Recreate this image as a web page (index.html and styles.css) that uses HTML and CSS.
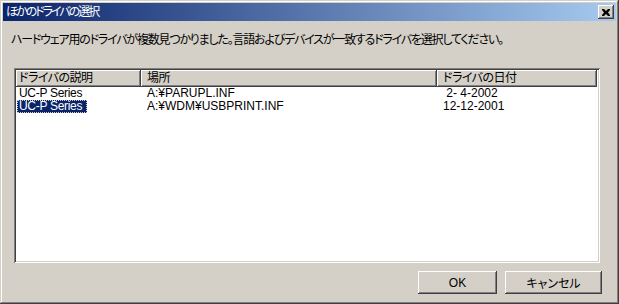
FILE: index.html
```html
<!DOCTYPE html>
<html lang="ja">
<head>
  <meta charset="UTF-8" />
  <title>ほかのドライバの選択</title>
  <link rel="stylesheet" href="styles.css">
</head>
<body>
  <div class="window">
    <div class="titlebar">
      <span class="title">ほかのドライバの選択</span>
      <button class="close" aria-label="閉じる">
        <svg width="8" height="7" viewBox="0 0 8 7">
          <path d="M0 0h2l2 2 2-2h2v1L6 3.5 8 6v1H6L4 5 2 7H0V6l2-2.5L0 1z" fill="#000"/>
        </svg>
      </button>
    </div>

    <div class="content">
      <p class="message">ハードウェア用のドライバが複数見つかりました。言語およびデバイスが一致するドライバを選択してください。</p>

      <div class="listview">
        <div class="header">
          <div class="col col-desc">ドライバの説明</div>
          <div class="col col-path">場所</div>
          <div class="col col-date">ドライバの日付</div>
          <div class="col col-rest"></div>
        </div>
        <div class="row">
          <div class="cell col-desc"><span class="item">UC-P Series</span></div>
          <div class="cell col-path">A:¥PARUPL.INF</div>
          <div class="cell col-date"> 2- 4-2002</div>
        </div>
        <div class="row">
          <div class="cell col-desc"><span class="item selected">UC-P Series</span></div>
          <div class="cell col-path">A:¥WDM¥USBPRINT.INF</div>
          <div class="cell col-date">12-12-2001</div>
        </div>
      </div>

      <div class="actions">
        <button class="btn btn-ok">OK</button>
        <button class="btn btn-cancel">キャンセル</button>
      </div>
    </div>
  </div>
</body>
</html>
```

FILE: styles.css
```css
body {
  margin: 0;
  font-family: "Liberation Sans", "Noto Sans CJK JP", sans-serif;
  font-size: 12px;
  font-feature-settings: "palt";
  color: #000;
  background: #d4d0c8;
}

.window {
  width: 619px;
  height: 304px;
  box-sizing: border-box;
  padding: 3px;
  background: #d4d0c8;
  display: flex;
  flex-direction: column;
  box-shadow: inset -1px -1px #404040, inset 1px 1px #d4d0c8,
              inset -2px -2px #808080, inset 2px 2px #fff;
}

.titlebar {
  height: 18px;
  display: flex;
  align-items: center;
  justify-content: space-between;
  padding: 0 2px 0 3px;
  background: linear-gradient(to right, #0a246a, #a6caf0);
}

.title {
  color: #fff;
  font-size: 12px;
  line-height: 14px;
  letter-spacing: -2px;
}

.close {
  width: 16px;
  height: 14px;
  padding: 0;
  border: none;
  background: #d4d0c8;
  display: flex;
  align-items: center;
  justify-content: center;
  box-shadow: inset -1px -1px #404040, inset 1px 1px #fff,
              inset -2px -2px #808080, inset 2px 2px #d4d0c8;
}

.content {
  flex: 1;
  display: flex;
  flex-direction: column;
}

.message {
  margin: 12px 0 0 8px;
  line-height: 14px;
  letter-spacing: -1.2px;
  white-space: nowrap;
}

.listview {
  margin: 21px 16px 0 11px;
  height: 195px;
  box-sizing: border-box;
  padding: 2px;
  background: #fff;
  box-shadow: inset 1px 1px #808080, inset -1px -1px #fff,
              inset 2px 2px #404040, inset -2px -2px #d4d0c8;
}

.header {
  display: flex;
  height: 17px;
}

.header .col {
  box-sizing: border-box;
  padding-left: 6px;
  line-height: 16px;
  background: #d4d0c8;
  white-space: nowrap;
  letter-spacing: -0.5px;
  box-shadow: inset -1px -1px #404040, inset 1px 1px #fff,
              inset -2px -2px #808080;
}

.header .col-desc {
  padding-left: 3px;
}

.col-desc { width: 125px; }
.col-path { width: 296px; }
.col-date { width: 160px; }
.header .col-rest { flex: 1; padding: 0; background: #fff; box-shadow: none; }

.row {
  display: flex;
  height: 13px;
  line-height: 13px;
}

.cell {
  box-sizing: border-box;
  padding-left: 6px;
  white-space: pre;
}

.row .col-desc {
  padding-left: 1px;
}

.item {
  display: inline-block;
  padding: 0 5px 0 2px;
  letter-spacing: -0.3px;
}

.selected {
  background: #0a246a;
  color: #fff;
  outline: 1px dotted #d4d0c8;
  outline-offset: -1px;
}

.actions {
  display: flex;
  justify-content: flex-end;
  gap: 8px;
  margin: 8px 14px 0 0;
}

.btn {
  height: 23px;
  padding: 0;
  border: none;
  background: #d4d0c8;
  font: inherit;
  color: #000;
  box-shadow: inset -1px -1px #404040, inset 1px 1px #fff,
              inset -2px -2px #808080, inset 2px 2px #d4d0c8;
}

.btn-ok { width: 79px; }
.btn-cancel { width: 97px; }
```
